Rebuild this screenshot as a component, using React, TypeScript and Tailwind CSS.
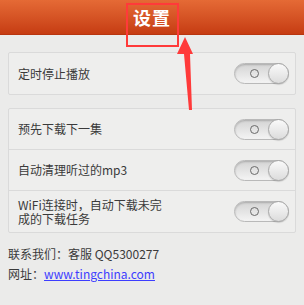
import React from "react";

const font = { fontFamily: '"Noto Sans CJK SC", "Liberation Sans", sans-serif' };

function Toggle() {
  return (
    <div className="relative w-[55px] h-[21px] rounded-full border border-[#b9b9b9] bg-gradient-to-b from-[#d4d4d4] to-[#f4f4f4] shadow-[inset_0_1px_2px_rgba(0,0,0,0.2)] shrink-0">
      <div className="absolute left-[15px] top-[5px] w-[9px] h-[9px] rounded-full border-[1.5px] border-[#6a6a6a]" />
      <div className="absolute right-[-1px] top-[-1px] w-[21px] h-[21px] rounded-full border border-[#a9a9a9] bg-gradient-to-b from-[#fafafa] to-[#dcdcdc] shadow-[0_1px_1px_rgba(0,0,0,0.15)]" />
    </div>
  );
}

function Row({ children, last }: { children: React.ReactNode; last?: boolean }) {
  return (
    <div className={`flex items-center justify-between pl-[9px] pr-[6px] h-[41px] ${last ? "" : "border-b border-[#dadada]"}`}>
      <div className="text-[12px] leading-[14px] text-[#3a3a3a]">{children}</div>
      <Toggle />
    </div>
  );
}

export default function App() {
  return (
    <div className="relative w-[304px] h-[305px] bg-[#ebebea] overflow-hidden" style={font}>
      <div className="h-[35px] flex items-center justify-center bg-gradient-to-b from-[#e56a35] to-[#c63c12] border-b border-[#b8350f]">
        <span className="text-white text-[18px] font-bold tracking-[1px]">设置</span>
      </div>
      <div className="px-[8px] pt-[17px]">
        <div className="rounded-[2px] border border-[#dadada] bg-[#eeeeed]">
          <Row last>定时停止播放</Row>
        </div>
        <div className="mt-[13px] rounded-[2px] border border-[#dadada] bg-[#eeeeed]">
          <Row>预先下载下一集</Row>
          <Row>自动清理听过的mp3</Row>
          <Row last>
            WiFi连接时，自动下载未完
            <br />
            成的下载任务
          </Row>
        </div>
        <div className="mt-[11px] text-[12px] text-[#3a3a3a] leading-[20px]">
          <div>联系我们：客服 QQ5300277</div>
          <div>
            网址：<span className="text-[#3d3dff] underline">www.tingchina.com</span>
          </div>
        </div>
      </div>
      <div className="absolute left-[126px] top-[3px] w-[53px] h-[44px] border-2 border-[#ff3a3a]" />
      <svg className="absolute left-0 top-0" width="304" height="305" viewBox="0 0 304 305">
        <polygon points="185,37 193,54 190,54 192,110 189,110 184,54 177,54" fill="#ff3a3a" />
      </svg>
    </div>
  );
}
